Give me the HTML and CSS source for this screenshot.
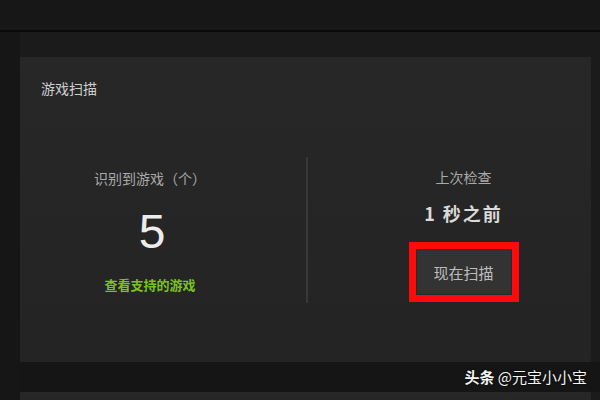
FILE: index.html
```html
<!DOCTYPE html>
<html lang="zh">
<head>
<meta charset="utf-8">
<link rel="stylesheet" href="styles.css">
</head>
<body>
<div class="topbar"></div>
<div class="main">
  <div class="strip"></div>
  <div class="content">
    <section class="panel">
      <div class="title">游戏扫描</div>
      <div class="stats">
        <div class="col col-left">
          <div class="label">识别到游戏（个）</div>
          <div class="count">5</div>
          <div class="link">查看支持的游戏</div>
        </div>
        <div class="divider"></div>
        <div class="col col-right">
          <div class="label">上次检查</div>
          <div class="ago">1 秒之前</div>
          <div class="highlight"><div class="btn">现在扫描</div></div>
        </div>
      </div>
    </section>
    <div class="band"><span class="wm"><b>头条</b> @元宝小小宝</span></div>
    <section class="panel panel2"></section>
  </div>
</div>
</body>
</html>
```
FILE: styles.css
```css
html, body {
  margin: 0;
  padding: 0;
}
body {
  width: 600px;
  height: 400px;
  overflow: hidden;
  background: #1b1b1b;
  font-family: "Noto Sans CJK SC", "Noto Sans", sans-serif;
}
.topbar {
  height: 30px;
  background: #171717;
  border-bottom: 2px solid #0b0b0b;
}
.main {
  display: flex;
  height: 368px;
}
.strip {
  width: 20px;
  background: #161616;
}
.content {
  width: 571px;
  padding-top: 25px;
}
.panel {
  height: 305px;
  background: linear-gradient(#272727, #242424);
  box-sizing: border-box;
  padding: 21px 0 0 21px;
}
.title {
  font-size: 14px;
  line-height: 20px;
  color: #cfcfcf;
}
.stats {
  display: flex;
  margin-top: 59px;
  margin-left: -21px;
  height: 146px;
}
.col {
  display: flex;
  flex-direction: column;
  align-items: center;
}
.col-left {
  width: 260px;
  margin-right: 26px;
}
.divider {
  width: 2px;
  background: #383838;
}
.col-right {
  width: 255px;
  padding-left: 28px;
}
.label {
  font-size: 14px;
  line-height: 20px;
  color: #a9a9a9;
}
.col-left .label {
  margin-top: 11px;
}
.count {
  margin-top: 19px;
  font-family: "Liberation Sans", Arial, sans-serif;
  font-size: 48px;
  line-height: 50px;
  color: #ececec;
  padding-left: 4px;
}
.link {
  margin-top: 18px;
  font-size: 13px;
  line-height: 20px;
  font-weight: bold;
  color: #79c21f;
}
.col-right .label {
  margin-top: 10px;
}
.ago {
  margin-top: 14px;
  font-size: 18px;
  line-height: 24px;
  font-weight: bold;
  letter-spacing: 2px;
  color: #dadada;
}
.highlight {
  margin-top: 17px;
  width: 110px;
  height: 60px;
  box-sizing: border-box;
  border: 7px solid #ff0a0a;
  background: #2a2a2a;
  padding: 1px;
}
.btn {
  height: 100%;
  background: #333333;
  color: #bdbdbd;
  font-size: 15px;
  display: flex;
  align-items: center;
  justify-content: center;
}
.band {
  height: 30px;
  background: #151515;
  display: flex;
  justify-content: flex-end;
  align-items: center;
  margin-right: -9px;
  padding-right: 13px;
}
.wm {
  font-size: 15px;
  color: #f4f4f4;
  line-height: 20px;
  text-shadow: 0 0 2px #000;
}
.wm b {
  font-weight: bold;
}
.panel2 {
  height: 20px;
}
```
